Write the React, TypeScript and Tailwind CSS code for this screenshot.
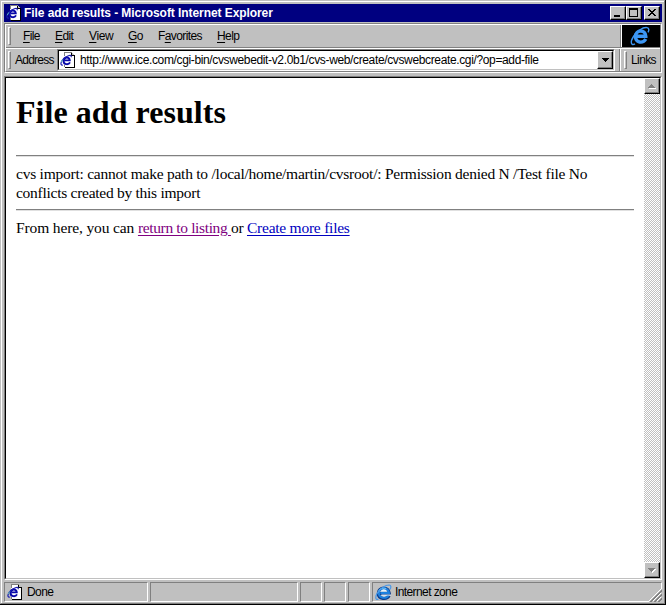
import React from "react";

function PageIcon() {
  return (
    <svg width="16" height="16" viewBox="0 0 16 16" className="block shrink-0" shapeRendering="crispEdges">
      <path d="M4 1h8l3 3v11H4z" fill="#fff" />
      <path d="M4 0h8v1H4zM4 1h1v3H4zM4 13h1v2H4z" fill="#808080" />
      <path d="M11 1h1v2h3v13H5v-1h9V4h-3z" fill="#000" />
      <path d="M12 1h1v1h1v1h-2z" fill="#c0c0c0" />
      <g shapeRendering="auto" fill="none">
        <path d="M10 10.4C8.6 13 3.6 12.9 3.6 8.9C3.6 4.6 9.8 4.4 9.8 8.4H4.8" stroke="#0808a8" strokeWidth="1.9" />
        <path d="M2.8 13.2C-1 13.6 1 6.6 8.4 3.7C10.6 2.9 11.8 3.6 11 5.3" stroke="#1818b0" strokeWidth="1.2" />
        <path d="M1.2 10.2L2.8 7.4" stroke="#58b8b8" strokeWidth="1" />
      </g>
    </svg>
  );
}

function ExplorerMark() {
  return (
    <svg width="20" height="20" viewBox="0 0 20 20" className="mr-[2px] block shrink-0" fill="none">
      <path d="M15.8 13C13 17.8 5.5 17 5.5 10.5C5.5 3.5 15.7 3 15.8 10.3H7" stroke="#3c96f4" strokeWidth="3.4" />
      <path d="M5 17.8C1 20.2 0 16 3.2 11C7 4.8 13 1 17 1.6C19.5 2 19 4.5 18 6.4" stroke="#3c96f4" strokeWidth="1.4" />
    </svg>
  );
}

function ZoneIcon() {
  return (
    <svg width="17" height="17" viewBox="0 0 17 17" className="block shrink-0" fill="none">
      <path d="M14.2 11.6C12 16 3.2 15.6 3.2 9.2C3.2 2.4 14.2 2.2 14.4 9.4H5" stroke="#103c88" strokeWidth="3" />
      <path d="M13.7 11.2C11.6 15 3.8 14.8 3.8 8.8C3.8 2.9 13.7 2.9 13.9 8.9H5.4" stroke="#1c80e0" strokeWidth="2.1" />
      <path d="M3.4 8.4C4 4.6 8.4 3 11 4.6" stroke="#70c8f8" strokeWidth="1.1" />
      <path d="M5.9 7.6C6.6 4.6 11.2 4.6 11.8 7.6z" fill="#e8f4ff" />
      <path d="M6.2 10.6H16V11.6H11.6C10.4 13 7 13 6.2 10.6z" fill="#d4e4f4" />
      <path d="M3.4 15.2C0 16.4 0 12 2.8 8.4C6 4 10.6 1 14 1C16.4 1.2 16.2 3.4 15 5.4" stroke="#4898e8" strokeWidth="1.2" />
    </svg>
  );
}

const RAISED = "border border-t-white border-l-white border-r-black border-b-black bg-[#c0c0c0] shadow-[inset_-1px_-1px_0_#808080]";

function TitleButton({ children }: { children: React.ReactNode }) {
  return (
    <button className={"block h-[14px] w-[16px] shrink-0 " + RAISED}>
      <svg width="14" height="12" viewBox="0 0 14 12" className="block" shapeRendering="crispEdges">
        {children}
      </svg>
    </button>
  );
}

function Gripper() {
  return <div className="h-[18px] w-[3px] shrink-0 border border-t-white border-l-white border-r-[#808080] border-b-[#808080] bg-[#c0c0c0]" />;
}

function MenuItem({ pre = "", hot, post, className }: { pre?: string; hot: string; post: string; className: string }) {
  return (
    <div className={"shrink-0 whitespace-nowrap " + className}>
      {pre}
      <span className="underline underline-offset-2">{hot}</span>
      {post}
    </div>
  );
}

function ScrollButton({ down = false }: { down?: boolean }) {
  return (
    <div className={"h-4 w-4 shrink-0 " + RAISED}>
      <svg width="14" height="14" viewBox="0 0 14 14" className="block" shapeRendering="crispEdges">
        {down ? (
          <>
            <path d="M4 6h7v1h-1v1H9v1H8v1H7V9H6V8H5V7H4z" fill="#fff" />
            <path d="M3 5h7v1H9v1H8v1H7v1H6V8H5V7H4V6H3z" fill="#808080" />
          </>
        ) : (
          <>
            <path d="M4 9h7v1H4z" fill="#fff" />
            <path d="M6 5h1v1h1v1h1v1h1v1H3V8h1V7h1V6h1z" fill="#808080" />
          </>
        )}
      </svg>
    </div>
  );
}

const SUNKEN = "border border-t-[#808080] border-l-[#808080] border-r-white border-b-white";

export default function App() {
  return (
    <div className="flex h-[605px] w-[666px] flex-col overflow-hidden border-r border-b border-black bg-[#c0c0c0] font-['Liberation_Sans',Arial,sans-serif] text-[12px] leading-[14px] tracking-[-0.6px] text-black">
      <div className="flex min-h-0 flex-1 flex-col border-t border-l border-r border-b border-t-[#c0c0c0] border-l-[#c0c0c0] border-r-[#808080] border-b-[#808080]">
        <div className="flex min-h-0 flex-1 flex-col border-t border-l border-white pt-[2px] pl-[2px] pr-[2px] pb-[1px]">
          <div className="flex h-[18px] shrink-0 items-center bg-[#000080] pl-[2px] pr-[2px]">
            <PageIcon />
            <div className="ml-[2px] flex-1 whitespace-nowrap font-bold text-white tracking-[-0.07px]">File add results - Microsoft Internet Explorer</div>
            <TitleButton><path d="M3 8h6v2H3z" fill="#000" /></TitleButton>
            <TitleButton><path d="M2 1h9v9H2zM3 3v6h7V3z" fillRule="evenodd" fill="#000" /></TitleButton>
            <div className="w-[2px]" />
            <TitleButton><path d="M3 2h2v1h1v1h2V3h1V2h2v1h-1v1H9v1H8v1h1v1h1v1h1v1H9V8H8V7H6v1H5v1H3V8h1V7h1V6h1V5H5V4H4V3H3z" fill="#000" /></TitleButton>
          </div>

          <div className="mt-[1px] flex h-[50px] shrink-0 flex-col border-t border-l border-r border-b border-t-[#808080] border-l-[#808080] border-r-white border-b-white">
            <div className="flex min-h-0 flex-1 flex-col border-t border-l border-r border-b border-t-white border-l-white border-r-[#808080] border-b-[#808080]">
              <div className="flex h-[22px] shrink-0">
                <div className="flex flex-1 items-center border-r border-[#808080] pl-[2px]">
                  <Gripper />
                  <MenuItem hot="F" post="ile" className="ml-[12px] w-[32px]" />
                  <MenuItem hot="E" post="dit" className="w-[34px]" />
                  <MenuItem hot="V" post="iew" className="w-[39px] tracking-[-0.4px]" />
                  <MenuItem hot="G" post="o" className="w-[30px]" />
                  <MenuItem pre="F" hot="a" post="vorites" className="w-[59px]" />
                  <MenuItem hot="H" post="elp" className="w-[30px]" />
                </div>
                <div className="flex w-[39px] items-center justify-center border-l border-white bg-black">
                  <ExplorerMark />
                </div>
              </div>
              <div className="h-[2px] shrink-0 border-t border-b border-t-[#808080] border-b-white" />
              <div className="flex h-[22px] shrink-0 items-center pl-[2px]">
                <Gripper />
                <div className="ml-[4px] w-[42px] shrink-0 tracking-[-0.75px]">Address</div>
                <div className="flex h-[22px] w-[558px] shrink-0 border border-t-[#808080] border-l-[#808080] border-r-white border-b-white">
                  <div className="flex min-w-0 flex-1 items-center border border-t-black border-l-black border-r-[#c0c0c0] border-b-[#c0c0c0] bg-white pl-[1px]">
                    <PageIcon />
                    <div className="ml-[4px] flex-1 whitespace-nowrap tracking-[-0.36px]">http://www.ice.com/cgi-bin/cvswebedit-v2.0b1/cvs-web/create/cvswebcreate.cgi/?op=add-file</div>
                    <div className={"flex h-[18px] w-4 shrink-0 items-center justify-center " + RAISED}>
                      <svg width="7" height="4" viewBox="0 0 7 4" shapeRendering="crispEdges"><path d="M0 0h7v1H6v1H5v1H4v1H3V3H2V2H1V1H0z" /></svg>
                    </div>
                  </div>
                </div>
                <div className="ml-[4px] h-[22px] w-[2px] shrink-0 border-l border-r border-l-[#808080] border-r-white" />
                <div className="ml-[3px] flex items-center">
                  <Gripper />
                  <div className="ml-[4px] whitespace-nowrap">Links</div>
                </div>
              </div>
            </div>
          </div>

          <div className="mt-[3px] flex h-[504px] shrink-0 border border-t-[#808080] border-l-[#808080] border-r-white border-b-white">
            <div className="flex flex-1 border border-t-black border-l-black border-r-[#c0c0c0] border-b-[#c0c0c0] bg-white">
              <div className="flex-1 pt-[15px] pl-[10px] pr-[10px] font-['Liberation_Serif','Times_New_Roman',serif] text-[15.5px] leading-[19px] tracking-[-0.24px]">
                <h1 className="h-[62px] text-[32px] leading-[38px] font-bold tracking-[0.05px]">File add results</h1>
                <hr className="h-[2px] border-t border-b border-t-[#808080] border-b-[#e0e0e0]" />
                <p className="h-[52px] pt-[7px] whitespace-nowrap">
                  <span className="block">cvs import: cannot make path to /local/home/martin/cvsroot/: Permission denied N /Test file No</span>
                  <span className="block tracking-[-0.27px]">conflicts created by this import</span>
                </p>
                <hr className="h-[2px] border-t border-b border-t-[#808080] border-b-[#e0e0e0]" />
                <p className="pt-[7px] whitespace-nowrap">
                  <span className="tracking-[-0.13px]">From here, you can </span>
                  <a className="whitespace-pre text-[#800080] underline underline-offset-2 tracking-[-0.36px]">return to listing </a>or <a className="text-[#0000c0] underline underline-offset-2">Create more files</a>
                </p>
              </div>
              <div className="flex w-4 shrink-0 flex-col justify-between bg-[repeating-conic-gradient(#c0c0c0_0%_25%,#ffffff_0%_50%)] bg-[length:2px_2px]">
                <ScrollButton />
                <ScrollButton down />
              </div>
            </div>
          </div>

          <div className="mt-[2px] flex h-[20px] shrink-0 gap-[2px]">
            <div className={"flex w-[144px] items-center pl-[2px] " + SUNKEN}>
              <PageIcon />
              <span className="ml-[4px]">Done</span>
            </div>
            <div className={"w-[148px] " + SUNKEN} />
            <div className={"w-[22px] " + SUNKEN} />
            <div className={"w-[22px] " + SUNKEN} />
            <div className={"w-[22px] " + SUNKEN} />
            <div className={"relative flex flex-1 items-center pl-[2px] " + SUNKEN}>
              <ZoneIcon />
              <span className="ml-[3px]">Internet zone</span>
              <svg width="13" height="13" viewBox="0 0 13 13" className="absolute right-[-1px] bottom-[-1px] bg-[#c0c0c0]" shapeRendering="crispEdges">
                <path d="M0 12L12 0M4 12L12 4M8 12L12 8" stroke="#fff" />
                <path d="M1 13L13 1M2 13L13 2M5 13L13 5M6 13L13 6M9 13L13 9M10 13L13 10" stroke="#808080" />
              </svg>
            </div>
          </div>
        </div>
      </div>
    </div>
  );
}
